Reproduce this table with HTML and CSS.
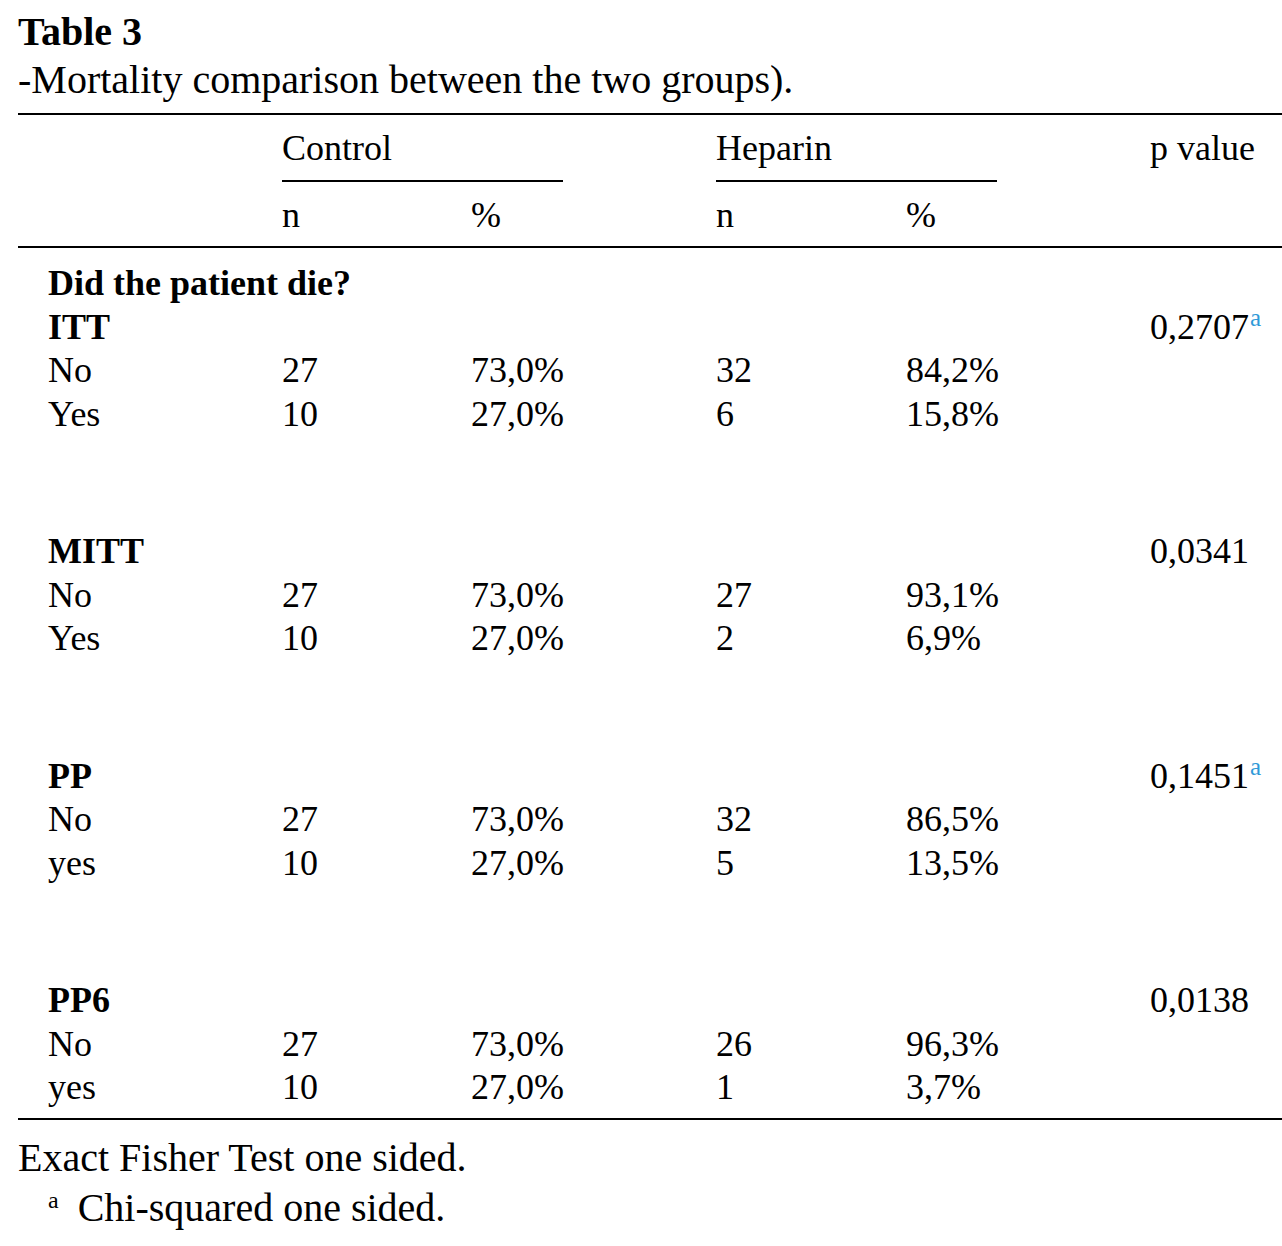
FILE: index.html
```html
<!DOCTYPE html>
<html lang="en">
<head>
<meta charset="utf-8">
<title>Table 3</title>
<link rel="stylesheet" href="styles.css">
</head>
<body>
<div class="page">
  <div class="title">Table 3</div>
  <div class="caption">-Mortality comparison between the two groups).</div>
  <div class="table">
    <div class="thead">
      <div class="row head1">
        <div class="grp ctrl">Control</div>
        <div class="grp hep">Heparin</div>
        <div class="pv">p value</div>
      </div>
      <div class="row head2">
        <div class="cn">n</div>
        <div class="cp">%</div>
        <div class="hn">n</div>
        <div class="hp">%</div>
      </div>
    </div>
    <div class="tbody">
      <div class="row"><div class="lbl b">Did the patient die?</div></div>
      <div class="group">
        <div class="row"><div class="lbl b">ITT</div><div class="pv">0,2707<sup class="fn">a</sup></div></div>
        <div class="row"><div class="lbl">No</div><div class="cn">27</div><div class="cp">73,0%</div><div class="hn">32</div><div class="hp">84,2%</div></div>
        <div class="row"><div class="lbl">Yes</div><div class="cn">10</div><div class="cp">27,0%</div><div class="hn">6</div><div class="hp">15,8%</div></div>
      </div>
      <div class="group">
        <div class="row"><div class="lbl b">MITT</div><div class="pv">0,0341</div></div>
        <div class="row"><div class="lbl">No</div><div class="cn">27</div><div class="cp">73,0%</div><div class="hn">27</div><div class="hp">93,1%</div></div>
        <div class="row"><div class="lbl">Yes</div><div class="cn">10</div><div class="cp">27,0%</div><div class="hn">2</div><div class="hp">6,9%</div></div>
      </div>
      <div class="group">
        <div class="row"><div class="lbl b">PP</div><div class="pv">0,1451<sup class="fn">a</sup></div></div>
        <div class="row"><div class="lbl">No</div><div class="cn">27</div><div class="cp">73,0%</div><div class="hn">32</div><div class="hp">86,5%</div></div>
        <div class="row"><div class="lbl">yes</div><div class="cn">10</div><div class="cp">27,0%</div><div class="hn">5</div><div class="hp">13,5%</div></div>
      </div>
      <div class="group">
        <div class="row"><div class="lbl b">PP6</div><div class="pv">0,0138</div></div>
        <div class="row"><div class="lbl">No</div><div class="cn">27</div><div class="cp">73,0%</div><div class="hn">26</div><div class="hp">96,3%</div></div>
        <div class="row"><div class="lbl">yes</div><div class="cn">10</div><div class="cp">27,0%</div><div class="hn">1</div><div class="hp">3,7%</div></div>
      </div>
    </div>
  </div>
  <div class="notes">
    <div class="note">Exact Fisher Test one sided.</div>
    <div class="note sub"><span class="nmark">a</span>Chi-squared one sided.</div>
  </div>
</div>
</body>
</html>
```

FILE: styles.css
```css
html, body {
  margin: 0;
  padding: 0;
  background: #ffffff;
}

body {
  font-family: "Liberation Serif", "Times New Roman", serif;
  color: #000000;
}

.page {
  width: 1264px;
  padding: 8px 0 0 18px;
}

.title {
  font-size: 40px;
  font-weight: bold;
  line-height: 47px;
}

.caption {
  margin-top: 1px;
  font-size: 40px;
  line-height: 47px;
}

.table {
  margin-top: 10px;
  font-size: 36px;
  line-height: 43.5px;
}

.thead {
  border-top: 2px solid #000;
  border-bottom: 2px solid #000;
}

.tbody {
  padding: 14px 0 8px;
  border-bottom: 2px solid #000;
}

.row {
  display: grid;
  grid-template-columns: 234px 189px 92px 153px 190px 91px 153px 1fr;
  padding-left: 30px;
  align-items: start;
}

.row > div {
  white-space: nowrap;
}

.head1 {
  padding-top: 12px;
}

.head2 {
  padding-top: 12px;
  padding-bottom: 8.5px;
}

.grp {
  padding-bottom: 9.5px;
  border-bottom: 2px solid #000;
}

.ctrl { grid-column: 2 / 4; }
.hep { grid-column: 5 / 7; }

.lbl { grid-column: 1; }
.cn { grid-column: 2; }
.cp { grid-column: 3; }
.hn { grid-column: 5; }
.hp { grid-column: 6; }
.pv { grid-column: 8; }

.b { font-weight: bold; }

.group + .group {
  margin-top: 94px;
}

.fn {
  font-size: 25px;
  line-height: 0;
  vertical-align: 13px;
  margin-left: 1px;
  color: #2f9ad8;
}

.notes {
  margin-top: 13.5px;
  font-size: 40px;
  line-height: 50px;
}

.note.sub {
  padding-left: 30px;
}

.nmark {
  font-size: 24px;
  line-height: 0;
  vertical-align: 13px;
  margin-right: 19px;
}
```
